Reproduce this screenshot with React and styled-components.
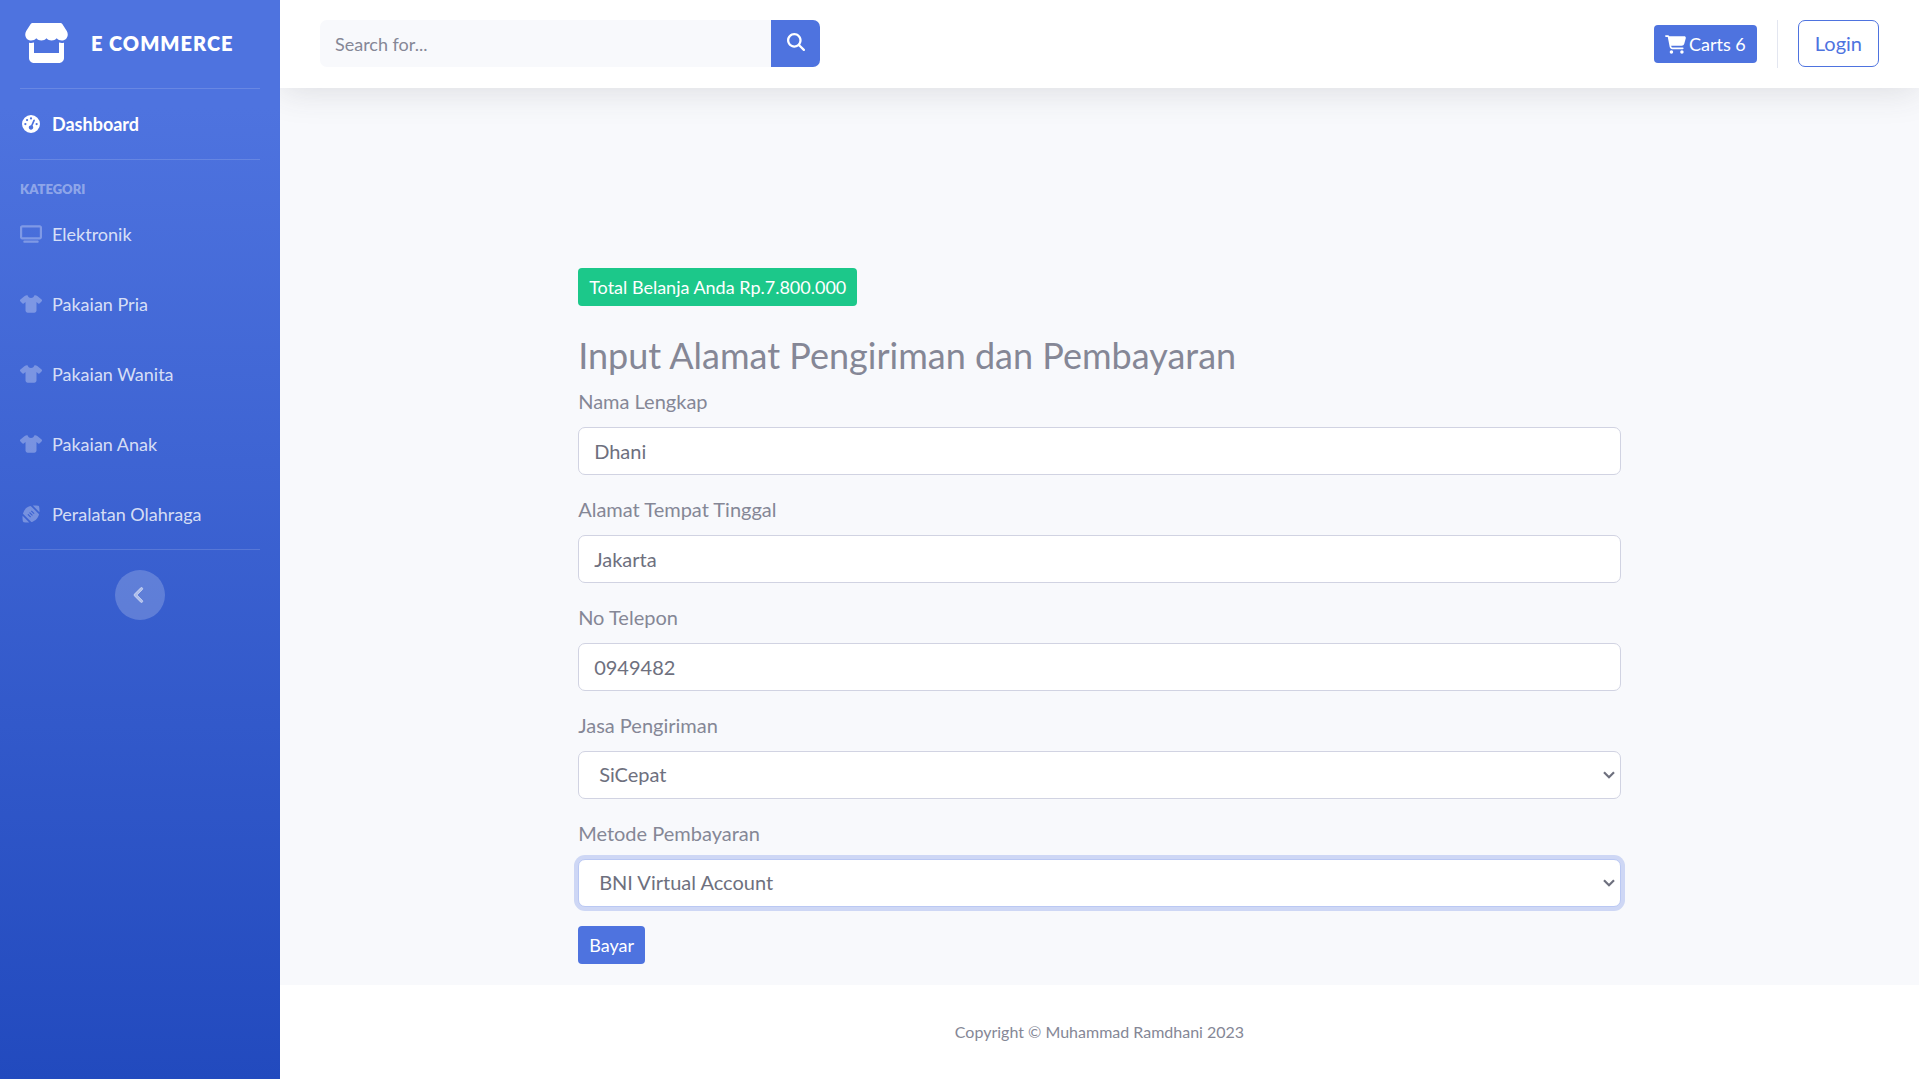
import React from "react";
import styled, { createGlobalStyle } from "styled-components";
import {
  FaStore,
  FaGaugeHigh,
  FaTv,
  FaShirt,
  FaFootball,
  FaCartShopping,
  FaMagnifyingGlass,
  FaAngleLeft,
} from "react-icons/fa6";

const GlobalStyle = createGlobalStyle`
  *, *::before, *::after { box-sizing: border-box; }
  body {
    margin: 0;
    background: #fff;
    color: #858796;
    font-family: Lato, "Open Sans", sans-serif;
    font-size: 20px;
    line-height: 30px;
  }
  button, input, select { font-family: inherit; margin: 0; }
  a { text-decoration: none; }
`;

const Page = styled.div`
  display: flex;
  min-height: 100vh;
`;

const Sidebar = styled.nav`
  flex: 0 0 280px;
  position: relative;
  z-index: 1;
  background: linear-gradient(180deg, #4e73df 10%, #224abe 100%);
`;

const Brand = styled.a`
  display: flex;
  align-items: center;
  gap: 22px;
  height: 88px;
  padding: 0 24px 3px;
  color: #fff;
  font-size: 20px;
  font-weight: 800;
  letter-spacing: 1px;
  text-transform: uppercase;

  svg {
    width: 45px;
    height: 40px;
  }
`;

const Divider = styled.hr`
  margin: 0 20px;
  border: 0;
  border-top: 1px solid rgba(255, 255, 255, 0.15);
`;

const Heading = styled.div`
  padding: 19px 20px 0;
  color: rgba(255, 255, 255, 0.4);
  font-size: 13px;
  line-height: 20px;
  font-weight: 800;
  text-transform: uppercase;
`;

const NavList = styled.ul`
  margin: 0;
  padding: 0;
  list-style: none;
`;

const NavLink = styled.a`
  display: flex;
  align-items: center;
  gap: 10px;
  height: 70px;
  padding: 0 20px;
  color: ${(p) => (p.$active ? "#fff" : "rgba(255, 255, 255, 0.8)")};
  font-size: 18px;
  font-weight: ${(p) => (p.$active ? 700 : 400)};

  svg {
    width: 22px;
    height: 18px;
    color: ${(p) => (p.$active ? "#fff" : "rgba(255, 255, 255, 0.3)")};
  }
`;

const Collapse = styled.button`
  display: flex;
  align-items: center;
  justify-content: center;
  width: 50px;
  height: 50px;
  margin: 20px auto;
  padding: 0 2px 0 0;
  border: 0;
  border-radius: 50%;
  background: rgba(255, 255, 255, 0.2);
  color: rgba(255, 255, 255, 0.5);
  cursor: pointer;

  svg {
    width: 20px;
    height: 20px;
    stroke: currentColor;
    stroke-width: 20px;
  }
`;

const Content = styled.div`
  flex: 1;
  min-width: 0;
  display: flex;
  flex-direction: column;
  background: #f8f9fc;
`;

const Topbar = styled.header`
  display: flex;
  align-items: center;
  justify-content: space-between;
  height: 88px;
  padding: 0 40px;
  background: #fff;
  box-shadow: 0 3px 35px rgba(58, 59, 69, 0.15);
`;

const Search = styled.form`
  display: flex;
  width: 500px;
  height: 47px;
  margin-bottom: 1px;
`;

const SearchInput = styled.input`
  flex: 1;
  min-width: 0;
  padding: 0 15px;
  border: 0;
  border-radius: 7px 0 0 7px;
  background: #f8f9fc;
  color: #6e707e;
  font-size: 18px;

  &::placeholder { color: #858796; opacity: 1; }
`;

const SearchButton = styled.button`
  display: flex;
  align-items: center;
  justify-content: center;
  width: 49px;
  padding: 0 0 4px;
  border: 0;
  border-radius: 0 7px 7px 0;
  background: #4e73df;
  color: #fff;

  svg {
    width: 18px;
    height: 18px;
  }
`;

const Actions = styled.div`
  display: flex;
  align-items: center;
  gap: 20px;
`;

const Button = styled.button`
  display: inline-flex;
  align-items: center;
  gap: 3px;
  height: 38px;
  padding: 0 11px;
  border: 0;
  border-radius: 4px;
  background: ${(p) => (p.$success ? "#1cc88a" : "#4e73df")};
  color: #fff;
  font-size: 18px;
  line-height: 26px;

  svg {
    width: 21px;
    height: 19px;
  }
`;

const Separator = styled.span`
  width: 1px;
  height: 48px;
  background: #e3e6f0;
`;

const LoginLink = styled.a`
  display: flex;
  align-items: center;
  height: 47px;
  margin-bottom: 1px;
  padding: 0 16px 2px;
  border: 1px solid #4e73df;
  border-radius: 7px;
  color: #4e73df;
  font-size: 20px;
`;

const Main = styled.main`
  flex: 1;
  display: grid;
  grid-template-columns: repeat(12, 1fr);
  gap: 30px;
  padding: 180px 30px 20px;
`;

const Panel = styled.section`
  grid-column: 3 / span 8;
`;

const Title = styled.h3`
  margin: 28px 0 10px;
  font-size: 36px;
  line-height: 42px;
  font-weight: 400;
`;

const Field = styled.div`
  margin-bottom: 19px;
`;

const Label = styled.label`
  display: block;
  margin-bottom: 11px;
`;

const Control = styled.input`
  display: block;
  width: 100%;
  height: 48px;
  padding: 0 15px;
  border: 1px solid #d1d3e2;
  border-radius: 7px;
  background: #fff;
  color: #6e707e;
  font-size: 20px;
  outline: 0;
`;

const SelectBox = styled.div`
  position: relative;

  svg {
    position: absolute;
    top: 20px;
    right: 6px;
    width: 12px;
    height: 8px;
    pointer-events: none;
  }
`;

const Select = styled(Control)`
  appearance: none;
  padding: 0 20px 2px;
  border-color: ${(p) => (p.$focused ? "#bac8f3" : "#d1d3e2")};
  box-shadow: ${(p) => (p.$focused ? "0 0 0 4px rgba(78, 115, 223, 0.25)" : "none")};
`;

const Footer = styled.footer`
  padding: 39px;
  background: #fff;
  font-size: 16px;
  line-height: 16px;
  text-align: center;
`;

const categories = [
  { name: "Elektronik", Icon: FaTv },
  { name: "Pakaian Pria", Icon: FaShirt },
  { name: "Pakaian Wanita", Icon: FaShirt },
  { name: "Pakaian Anak", Icon: FaShirt },
  { name: "Peralatan Olahraga", Icon: FaFootball },
];

const textFields = [
  { id: "nama", label: "Nama Lengkap", value: "Dhani" },
  { id: "alamat", label: "Alamat Tempat Tinggal", value: "Jakarta" },
  { id: "telepon", label: "No Telepon", value: "0949482" },
];

const selectFields = [
  { id: "jasa", label: "Jasa Pengiriman", options: ["SiCepat"] },
  {
    id: "metode",
    label: "Metode Pembayaran",
    options: ["BNI Virtual Account"],
    focused: true,
  },
];

export default function App() {
  return (
    <>
      <GlobalStyle />
      <Page>
        <Sidebar>
          <Brand href="#">
            <FaStore />
            <span>E Commerce</span>
          </Brand>
          <Divider />
          <NavLink href="#" $active>
            <FaGaugeHigh />
            <span>Dashboard</span>
          </NavLink>
          <Divider />
          <Heading>Kategori</Heading>
          <NavList>
            {categories.map(({ name, Icon }) => (
              <li key={name}>
                <NavLink href="#">
                  <Icon />
                  <span>{name}</span>
                </NavLink>
              </li>
            ))}
          </NavList>
          <Divider />
          <Collapse type="button" aria-label="Toggle sidebar">
            <FaAngleLeft />
          </Collapse>
        </Sidebar>

        <Content>
          <Topbar>
            <Search>
              <SearchInput type="text" placeholder="Search for..." aria-label="Search" />
              <SearchButton type="button" aria-label="Search">
                <FaMagnifyingGlass />
              </SearchButton>
            </Search>
            <Actions>
              <Button type="button">
                <FaCartShopping />
                <span>Carts 6</span>
              </Button>
              <Separator />
              <LoginLink href="#">Login</LoginLink>
            </Actions>
          </Topbar>

          <Main>
            <Panel>
              <Button type="button" $success>
                Total Belanja Anda Rp.7.800.000
              </Button>
              <Title>Input Alamat Pengiriman dan Pembayaran</Title>
              <form>
                {textFields.map(({ id, label, value }) => (
                  <Field key={id}>
                    <Label htmlFor={id}>{label}</Label>
                    <Control id={id} type="text" defaultValue={value} />
                  </Field>
                ))}
                {selectFields.map(({ id, label, options, focused }) => (
                  <Field key={id}>
                    <Label htmlFor={id}>{label}</Label>
                    <SelectBox>
                      <Select as="select" id={id} $focused={focused}>
                        {options.map((o) => (
                          <option key={o}>{o}</option>
                        ))}
                      </Select>
                      <svg viewBox="0 0 12 8" fill="none" stroke="#6e707e" strokeWidth="2.2">
                        <path d="M1 1.2 L6 6.2 L11 1.2" />
                      </svg>
                    </SelectBox>
                  </Field>
                ))}
                <Button type="button">Bayar</Button>
              </form>
            </Panel>
          </Main>

          <Footer>Copyright © Muhammad Ramdhani 2023</Footer>
        </Content>
      </Page>
    </>
  );
}
